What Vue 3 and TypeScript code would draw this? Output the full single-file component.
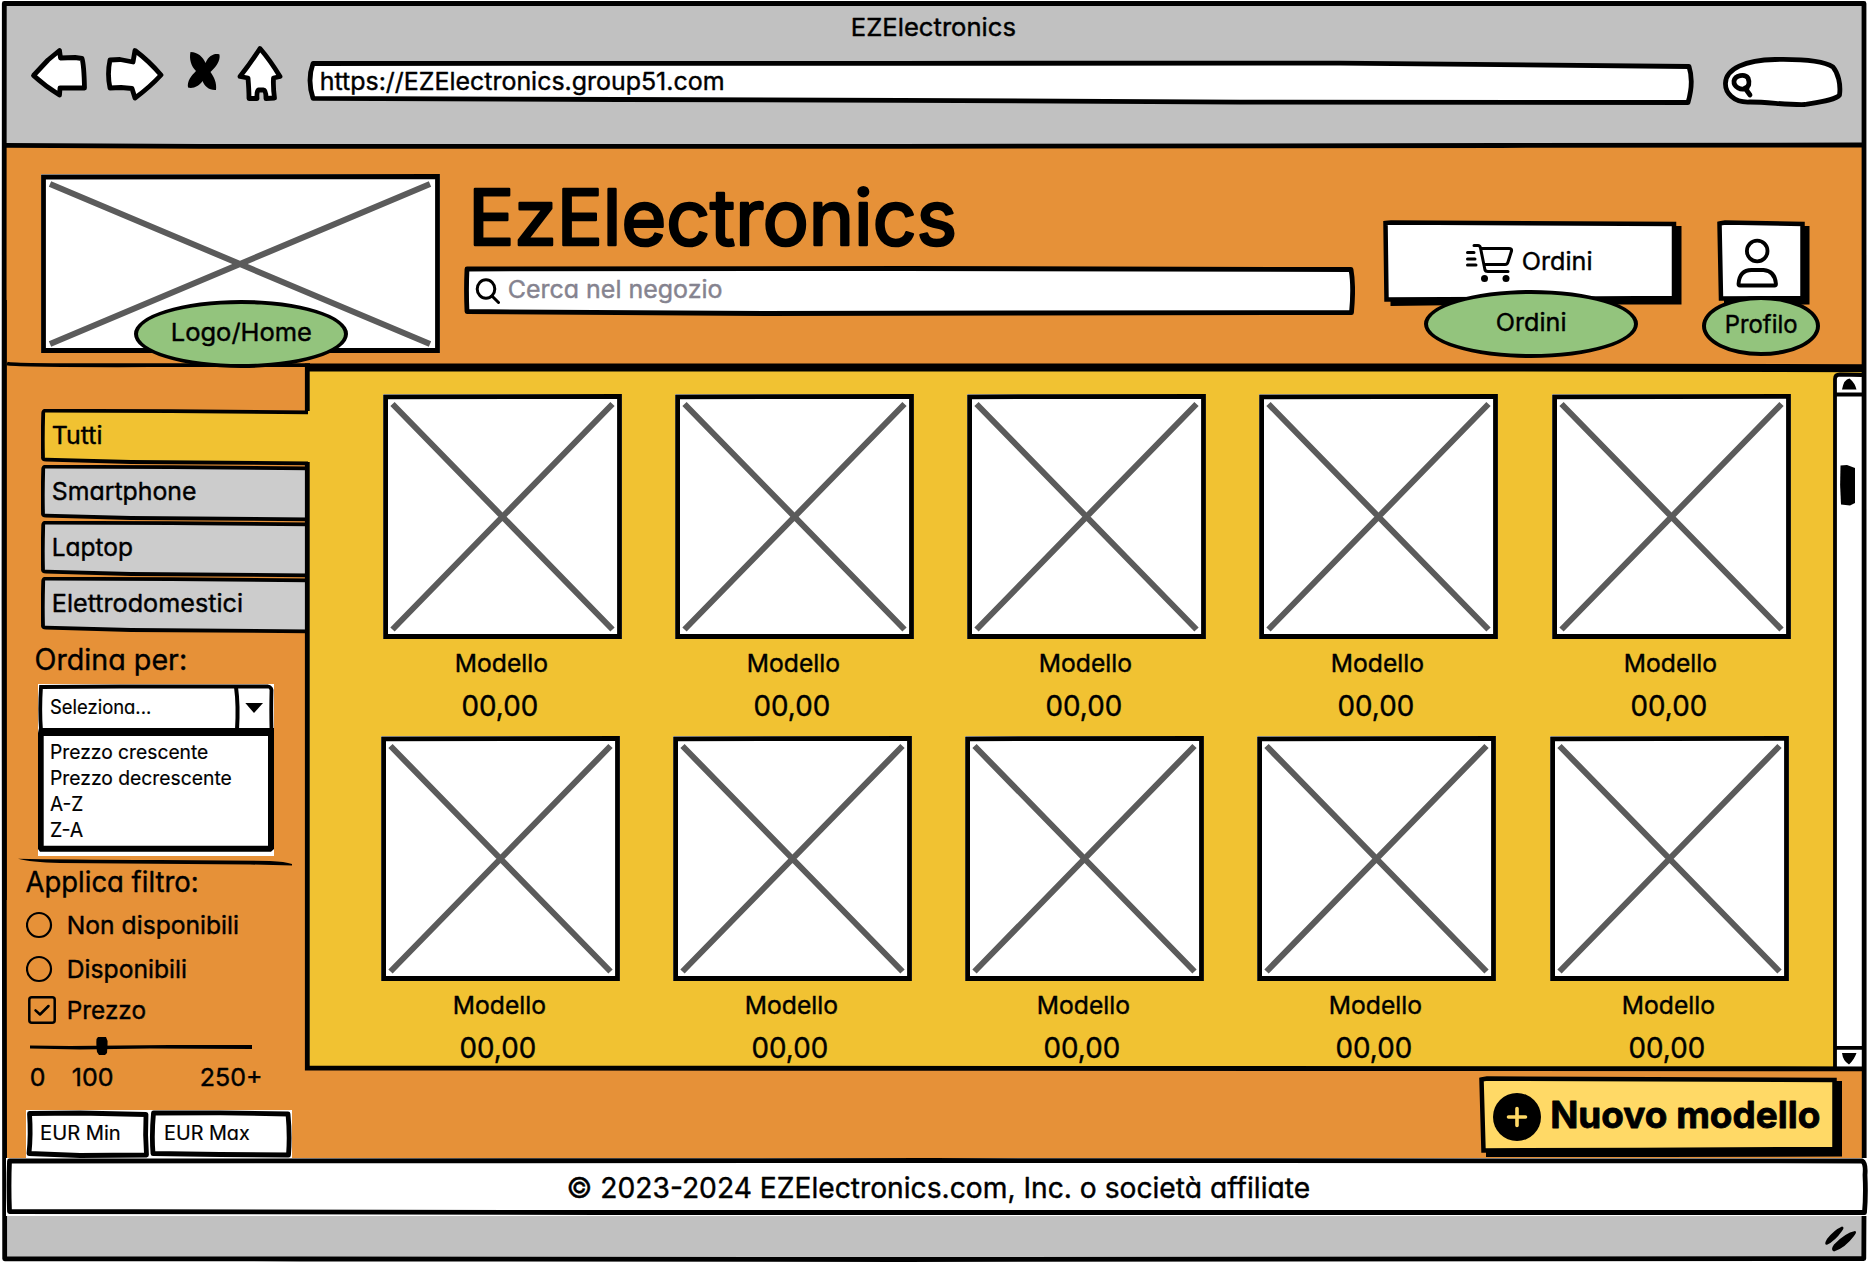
<script setup lang="ts">
import { h } from 'vue'

interface LabelProps {
  text: string
  w: number
  cap?: number
  weight?: number
  color?: string
  ink?: number
}

// Hand-lettered caption: the box is exactly as wide as the word and as tall as its capitals.
const Label = (p: LabelProps) => {
  const cap = p.cap ?? 18
  const size = cap / 0.735
  const color = p.color ?? '#000'
  return h('svg', { class: 'label', width: p.w, height: cap }, [
    h(
      'text',
      {
        x: -size * 0.05,
        y: cap,
        'font-size': size,
        'font-weight': p.weight ?? 400,
        fill: color,
        stroke: color,
        'stroke-width': p.ink ?? 0.4,
        'stroke-linejoin': 'round',
        textLength: p.w + size * 0.09,
        lengthAdjust: 'spacingAndGlyphs',
      },
      p.text,
    ),
  ])
}
Label.props = ['text', 'w', 'cap', 'weight', 'color', 'ink']

const tabs = [
  { name: 'Tutti', w: 48.5 },
  { name: 'Smartphone', w: 142.5 },
  { name: 'Laptop', w: 79 },
  { name: 'Elettrodomestici', w: 189 },
]
const sorts = [
  { name: 'Prezzo crescente', w: 156.5 },
  { name: 'Prezzo decrescente', w: 180 },
  { name: 'A-Z', w: 31.5 },
  { name: 'Z-A', w: 31.5 },
]
const rows = [1, 2]
const models = [1, 2, 3, 4, 5]
</script>

<template>
  <div class="window">
    <div class="chrome">
      <Label class="page-title" text="EZElectronics" :w="163" :cap="18.3" />
      <div class="nav">
        <svg width="58" height="63" viewBox="30 45 58 63" class="pen">
          <path d="M33.5 75.5L48 60L59.5 50.5L60.5 58L75 57.5L82 58.5Q84 65 84.5 88L60 88L59.5 95Q45 86 33.5 75.5Z" />
        </svg>
        <svg class="forward pen" width="60" height="63" viewBox="105 45 60 63">
          <path d="M110 60L120 59.5L133 62L135 50.5Q149 61 161 75Q150 87 135 98L132 88.5L121 87.5L110 88Q107 74 110 60Z" />
        </svg>
        <svg class="stop" width="34" height="63" viewBox="187 45 34 63">
          <path d="M190.500 52C198 52 203 57 205.500 63C209 55 215 53 219.500 54.500C220.500 61 216 67 210.500 72C214 77 217 83 216 90C209 90.500 204.500 86 202.500 81C199.500 86 193 89 188 87.500C187 81 191 76 196 71C191 66 189 59 190.500 52Z" />
        </svg>
        <svg class="home pen" width="47" height="63" viewBox="237 45 47 63">
          <path d="M260 48.500Q270 60 280 76.500L273.500 78Q273 88 274.500 98L266 98.500Q266 90 263.500 90L258.500 90Q256.500 91 257 98.500L249 98.500Q249 90 248 78L240 76.500Q250 64 260 48.500Z" />
        </svg>
        <div class="url">
          <svg class="ink pen" width="1389" height="63" viewBox="306 45 1389 63">
            <path d="M313 63.500L900 63.300L1340 63.200L1689 66.500Q1694 82 1688 102.500L1240 102.200L900 100.300L620 99.500L313 98.300Q307 80 313 63.500Z" />
          </svg>
          <Label text="https://EZElectronics.group51.com" :w="402.500" :cap="17.800" />
        </div>
        <svg class="pill pen" width="122" height="63" viewBox="1722 45 122 63">
          <path d="M1750 102C1733 103 1725 92 1725.500 83C1726 69 1745 60 1775 59.500C1800 59 1822 60 1833 67C1838 73 1841 84 1839.500 95C1836 100 1820 102 1805 104.500C1785 105 1770 102 1750 102Z" />
          <path d="M1747 88C1741 91 1733.500 87 1734 81C1735 75 1745 73.500 1748 78C1750 83 1749 87 1745 88L1750 95" />
        </svg>
      </div>
    </div>

    <header class="header">
      <div class="logo">
        <svg class="ink" width="399" height="179" viewBox="0 0 399 179">
          <rect x="0" y="0" width="399" height="179" fill="#fff" />
          <path d="M2.500 3Q180 2 396.500 2.500V176.500H2.500Z" fill="#fff" stroke="#000" stroke-width="4.800" />
          <path d="M9 10L389 170M389 10L9 170" stroke="#5b5b5b" stroke-width="6" />
        </svg>
        <div class="note home-note"><Label text="Logo/Home" :w="139" :cap="18" /></div>
      </div>
      <div class="brand">
        <Label class="brand-name" text="EzElectronics" :w="482" :cap="56.500" :ink="2.600" />
        <div class="search">
          <svg class="ink pen" width="891" height="50" viewBox="0 0 891 50">
            <path d="M3 3L440 2.500L887 3.500Q890 20 887.500 46.500L560 47L300 47.500L3 45.500Q2 24 3 3Z" />
          </svg>
          <svg class="pen lens" width="25" height="26" viewBox="0 0 25 26">
            <ellipse cx="11" cy="11" rx="8.800" ry="9.300" /><path d="M17 18L23.500 24.500" />
          </svg>
          <Label text="Cerca nel negozio" :w="212.500" :cap="18" color="#85838f" />
        </div>
      </div>
      <div class="orders">
        <svg class="ink" width="299" height="86" viewBox="0 0 299 86">
          <path d="M7.500 6H298.500V84.500L120 84.500L7.500 86Z" />
          <path class="card-ink" d="M2.500 3L8 2.500L291 4V78L120 79L3.500 79.500Z" />
        </svg>
        <svg class="cart" width="48" height="40" viewBox="1466 243 48 40">
          <path d="M1474 245.500H1478Q1480 245.500 1480.500 248L1485 270Q1485.500 271.500 1488 271.500H1508M1481 248.500H1509Q1512 248.500 1511.500 251L1508 262Q1507.500 264.500 1505 264.500H1484M1467.500 252.500H1474M1467.500 259H1475M1467.500 265H1476" fill="none" stroke="#000" stroke-width="3" stroke-linecap="round" stroke-linejoin="round" />
          <circle cx="1484.500" cy="278.500" r="3.500" /><circle cx="1506" cy="278.500" r="3.500" />
        </svg>
        <Label text="Ordini" :w="68.500" :cap="18" />
        <div class="note orders-note"><Label text="Ordini" :w="68.500" :cap="18" /></div>
      </div>
      <div class="profile">
        <svg class="ink" width="93" height="86" viewBox="0 0 93 86">
          <path d="M7 6H92.500V84.500L7 85Z" />
          <path class="card-ink" d="M2.500 3.500L8 2.500L85.500 4V78L4 78.500Z" />
        </svg>
        <svg class="user" width="42" height="52" viewBox="1735.500 238 42 52">
          <ellipse cx="1756.700" cy="251" rx="10.300" ry="10.300" />
          <path d="M1738 284Q1739 270 1751 270H1763Q1774.500 271 1775.500 284Q1775.500 285.500 1774 285.500H1739.500Q1738 285.500 1738 284Z" />
        </svg>
        <div class="note profile-note"><Label text="Profilo" :w="70.500" :cap="18" /></div>
      </div>
    </header>

    <div class="body">
      <aside class="side">
        <nav class="tabs">
          <div v-for="(t, i) in tabs" :key="t.name" class="tab">
            <svg class="ink" width="269" height="57" viewBox="0 0 269 57">
              <path :d="i === 0 ? 'M4 1.500L269 3V54L2 51Z' : 'M4 1.500L264 3V54L2 51Z'" :fill="i === 0 ? '#f1c232' : '#ccc'" />
              <path d="M267 3.300L130 2.200L4.500 1.700Q2 1.700 2.200 5Q1.500 28 2 48Q1.500 50.600 5 50.600L90 53L267 54.300" fill="none" stroke="#000" stroke-width="3.800" />
            </svg>
            <Label :text="t.name" :w="t.w" :cap="18" />
          </div>
        </nav>
        <Label class="sort-title" text="Ordina per:" :w="150" :cap="21.500" />
        <div class="select">
          <svg class="ink" width="236" height="172" viewBox="38 684 236 172">
            <rect x="38" y="684" width="236" height="172" fill="#fff" />
            <path d="M41 687L120 686.500L268 686.500Q271 687 271.500 690Q271 710 271.500 730H41Q39.500 710 41 687Z" fill="#fff" stroke="#000" stroke-width="3.800" />
            <path d="M236 687Q238.500 705 237 730" fill="none" stroke="#000" stroke-width="4" />
            <path d="M245.300 703H263L254 713Z" />
            <path d="M39 728H274V849L271 851.700H40L38 849V733Z M43.700 736V845.700H268V736Z" fill-rule="evenodd" />
          </svg>
          <Label text="Seleziona..." :w="99.500" :cap="14.700" :ink="0.200" />
          <div class="options">
            <Label v-for="s in sorts" :key="s.name" :text="s.name" :w="s.w" :cap="14.800" :ink="0.200" />
          </div>
        </div>
        <svg class="rule" width="276" height="10" viewBox="17 857 276 10">
          <path d="M18 858.700Q60 859.500 160 860L270 861Q285 861.500 292 864V865.500L250 864.500L60 863Q30 862 18 858.700Z" />
        </svg>
        <Label class="filter-title" text="Applica filtro:" :w="170.500" :cap="21" />
        <label class="choice">
          <svg width="28" height="28"><circle cx="13" cy="14" r="12" fill="none" stroke="#000" stroke-width="2.200" /></svg>
          <Label text="Non disponibili" :w="170" :cap="18" />
        </label>
        <label class="choice second">
          <svg width="28" height="28"><circle cx="13" cy="14" r="12" fill="none" stroke="#000" stroke-width="2.200" /></svg>
          <Label text="Disponibili" :w="118" :cap="18" />
        </label>
        <label class="choice third">
          <svg width="30" height="28">
            <g fill="none" stroke="#000" stroke-width="2.500" stroke-linecap="round" stroke-linejoin="round">
              <rect x="3.300" y="1.300" width="25.400" height="25.400" rx="2.500" /><path d="M9.500 14.300L14 18.500L22.500 10" />
            </g>
          </svg>
          <Label text="Prezzo" :w="77" :cap="18" />
        </label>
        <svg class="slider" width="224" height="20" viewBox="29 1036 224 20">
          <path d="M30 1045.500L70 1046L170 1045L252 1045V1049L150 1048.500L80 1049.500L30 1048.500Z" />
          <path d="M98 1037H106Q108 1040 107.500 1045L107 1053L105 1055H99L97 1052Q96 1044 96.500 1039Z" />
        </svg>
        <div class="scale">
          <Label text="0" :w="13.500" :cap="18" />
          <Label text="100" :w="39.500" :cap="18" />
          <Label text="250+" :w="60.500" :cap="18" />
        </div>
        <div class="limits">
          <svg class="ink pen" width="266" height="48" viewBox="26 1110 266 48">
            <rect x="26" y="1110" width="266" height="48" class="blank" />
            <path d="M29.500 1113.500L80 1113L146 1114.500Q145 1135 146.500 1155L80 1155.500L29 1153.500Q31 1135 29.500 1113.500Z" />
            <path d="M153.500 1113L220 1112.800L288 1114Q290 1135 288.500 1155L220 1154.500L153 1153.500Q151.500 1135 153.500 1113Z" />
          </svg>
          <Label class="min" text="EUR Min" :w="79" :cap="14.500" :ink="0.200" />
          <Label text="EUR Max" :w="84" :cap="14.500" :ink="0.200" />
        </div>
      </aside>

      <section class="content">
        <div class="shelf">
          <main class="grid">
            <div v-for="r in rows" :key="r" class="row">
              <article v-for="m in models" :key="m" class="card">
                <svg width="239" height="245" viewBox="0 0 239 245">
                  <rect width="239" height="245" fill="#fff" />
                  <path d="M2.600 2.800L236.500 2.400V242.500H2.600Z" fill="#fff" stroke="#000" stroke-width="4.800" />
                  <path d="M9.500 10L229.500 235.500M229.500 10L9.500 235.500" stroke="#5b5b5b" stroke-width="6" />
                </svg>
                <Label class="model" text="Modello" :w="91" :cap="18" />
                <Label class="price" text="00,00" :w="74" :cap="20.500" />
              </article>
            </div>
          </main>
          <svg class="scroll" width="31" height="702" viewBox="1833 367 31 702">
            <path d="M1834 375H1864V1068H1834Z" fill="#fff" />
            <path d="M1835 1068V379Q1835 374.500 1840 374.500L1862 375M1835 394.500H1862M1835 1047.800H1862" fill="none" stroke="#000" stroke-width="3.800" />
            <path d="M1842 389.500Q1844 379 1849.500 378.500Q1855 383 1856.500 389.500Z M1842 1053H1856.500Q1854 1060 1849 1064.500Q1843 1061 1842 1053Z" />
            <path d="M1840.500 465.500L1847 465L1855 468V503L1850 505.500L1841 504.500Q1839.500 485 1840.500 465.500Z" />
          </svg>
        </div>
        <div class="actions">
          <div class="create">
            <svg class="ink" width="363" height="81" viewBox="1479 1076 363 81">
              <path d="M1486 1081H1842V1156.500L1486 1157.500Z" />
              <path d="M1481.500 1079.500L1487 1078.500L1834.500 1080V1149L1640 1150L1483.500 1150.500Z" fill="#ffd966" stroke="#000" stroke-width="4.500" />
              <circle cx="1517" cy="1117" r="24" />
              <path d="M1508.500 1117H1525.500M1517 1108.500V1125.500" stroke="#ffd966" stroke-width="3.600" stroke-linecap="round" />
            </svg>
            <Label text="Nuovo modello" :w="267" :cap="27" :weight="700" :ink="0.800" />
          </div>
        </div>
      </section>
    </div>

    <footer class="footer">
      <svg class="ink pen" width="1862" height="58" viewBox="6 1158 1862 58">
        <path d="M9.500 1161L930 1160.500L1862 1161Q1866 1163 1865 1175Q1866 1195 1864.500 1212.500L1400 1212.500L600 1212.500L9.500 1211.500Q8.500 1185 9.500 1161Z" />
      </svg>
      <Label text="© 2023-2024 EZElectronics.com, Inc. o società affiliate" :w="741" :cap="20.500" />
    </footer>
    <div class="status">
      <svg width="34" height="28" viewBox="1824 1225 34 28">
        <path d="M1842 1226.500Q1845 1227 1842 1231Q1835 1241 1827 1244.800Q1823.500 1245 1827 1239Q1834 1230 1842 1226.500Z M1855 1231Q1857.500 1232 1854 1236Q1845 1248 1834 1251.500Q1830 1250 1834 1244.500Q1845 1233 1855 1231Z" />
      </svg>
    </div>

    <svg class="frame" width="1868" height="1264" viewBox="0 0 1868 1264" fill="none" stroke="#000" stroke-width="4.800">
      <path d="M1864.200 1160L1864 3.500L4.300 3.500L4 600L4.700 1258.800L300 1259L900 1259.500L1863.800 1258.500L1864 1214" stroke-linejoin="round" />
      <path d="M5 300V900" stroke-width="3.500" />
      <path d="M6 145.300L200 146.300L900 146.300L1500 145.500L1862 145" />
      <path d="M7 363.500Q14 365.500 150 365.200H310" stroke-width="3.800" />
      <path d="M305 367.500H1500L1864 368.200" stroke-width="8" />
      <path d="M307.300 366V411M307.300 462V1068L1864 1068.800" />
    </svg>
  </div>
</template>

<style>
body { margin: 0; background: #fff; }
.label {
  display: block;
  flex: none;
  overflow: visible;
  font-family: Inter, 'Open Sans', 'Liberation Sans', sans-serif;
  font-feature-settings: 'cv11' 1;
}
</style>

<style scoped>
.window {
  position: relative;
  box-sizing: border-box;
  width: 1868px;
  height: 1264px;
  padding: 3px 4px 5px;
  display: flex;
  flex-direction: column;
  background: #fff;
  overflow: hidden;
}
svg { display: block; flex: none; }
.ink { position: absolute; left: 0; top: 0; }
.ink ~ * { position: relative; }
.pen { fill: #fff; stroke: #000; stroke-width: 4.8; stroke-linejoin: round; stroke-linecap: round; }
.pen .blank { stroke: none; }
.frame { position: absolute; left: 0; top: 0; z-index: 1; pointer-events: none; }

.chrome {
  height: 143px;
  box-sizing: border-box;
  padding-top: 14.5px;
  display: flex;
  flex-direction: column;
  background: #c1c1c1;
}
.page-title { margin-left: 848px; }
.nav { display: flex; margin: 9.2px 0 0 26px; }
.forward { margin-left: 17px; }
.stop { margin-left: 22px; }
.home { margin-left: 16px; }
.url { position: relative; margin-left: 22px; width: 1374px; padding: 27px 0 0 15px; }
.pill { margin-left: 27px; }

.header { height: 221px; display: flex; align-items: flex-start; background: #e69138; }
.logo { position: relative; width: 399px; height: 179px; margin: 28px 0 0 37px; }
.brand { width: 891px; margin: 42px 0 0 24px; }
.brand-name { margin-left: 8px; }
.search { position: relative; height: 50px; margin-top: 21.500px; display: flex; }
.search .lens { margin: 12px 0 0 10.500px; fill: none; stroke-width: 3; }
.search .label { margin: 13.500px 0 0 9px; }
.orders { position: relative; width: 299px; height: 86px; margin: 74px 0 0 28px; display: flex; }
.card-ink { fill: #fff; stroke: #000; stroke-width: 4.5; }
.cart { margin: 23px 0 0 83px; }
.orders > .label { margin: 31.500px 0 0 9px; }
.profile { position: relative; width: 93px; height: 86px; margin: 74px 0 0 35px; display: flex; }
.user { margin: 18px 0 0 18.500px; fill: none; stroke: #000; stroke-width: 3.8; }

.note {
  position: absolute;
  z-index: 2;
  box-sizing: border-box;
  display: flex;
  align-items: center;
  justify-content: center;
  border: 4px solid #000;
  border-radius: 50%;
  background: #93c47d;
}
.ink ~ .note { position: absolute; }
.home-note { left: 93px; top: 126px; width: 214px; height: 68px; padding-bottom: 4px; }
.orders-note { left: 41px; top: 70px; width: 214px; height: 68px; padding-bottom: 5px; }
.profile-note { left: -15px; top: 76px; width: 118px; height: 60px; padding-bottom: 5px; }

.body { height: 791px; display: flex; }
.side { position: relative; width: 303px; background: #e69138; }
.tabs { margin: 42px 0 0 37px; }
.tab { position: relative; width: 257px; height: 39.500px; padding: 16.500px 0 0 12px; }
.sort-title { margin: 15px 0 0 31.500px; }
.select { position: relative; width: 224px; height: 157px; margin: 14.300px 0 0 34px; padding: 15px 0 0 12.500px; }
.options { margin-top: 31px; display: flex; flex-direction: column; gap: 11px; }
.rule { margin: 1.200px 0 0 13px; }
.filter-title { margin: 3.700px 0 0 22.500px; }
.choice { display: flex; align-items: center; height: 28px; margin: 19.500px 0 0 22px; }
.choice .label { position: absolute; left: 64px; }
.second { margin-top: 16px; }
.third { margin-top: 13px; }
.slider { margin: 12px 0 0 25px; }
.scale { display: flex; margin: 11.700px 0 0 26.500px; }
.scale .label:nth-child(2) { margin-left: 28.500px; }
.scale .label:nth-child(3) { margin-left: 89px; }
.limits { position: relative; display: flex; width: 266px; height: 48px; margin: 24.300px 0 0 22px; padding-top: 15.300px; box-sizing: border-box; }
.limits .min { margin: 0 45.500px 0 14.500px; }

.content { width: 1557px; display: flex; flex-direction: column; }
.shelf { height: 702px; display: flex; background: #f1c232; }
.grid { width: 1526px; padding-top: 27px; }
.row { display: flex; gap: 53px; height: 342px; margin-left: 75.700px; }
.row + .row { margin-left: 73.700px; }
.card { width: 239px; flex: none; }
.card:last-child { margin-left: 1.700px; }
.model { margin: 14.700px 0 0 73px; }
.price { margin: 23.500px 0 0 80px; }
.actions { flex: 1; display: flex; align-items: flex-start; background: #e69138; }
.create { position: relative; width: 290px; height: 81px; margin: 7px 0 0 1172px; padding-left: 73px; display: flex; align-items: flex-start; }
.create .label { margin-top: 24.700px; }

.footer { position: relative; z-index: 2; width: 1862px; height: 58px; margin-left: 2px; background: #fff; display: flex; }
.footer .label { margin: 18.500px 0 0 562px; }
.status { height: 42px; display: flex; justify-content: flex-end; align-items: flex-start; background: #c1c1c1; }
.status svg { margin: 9px 6px 0 0; }
</style>
